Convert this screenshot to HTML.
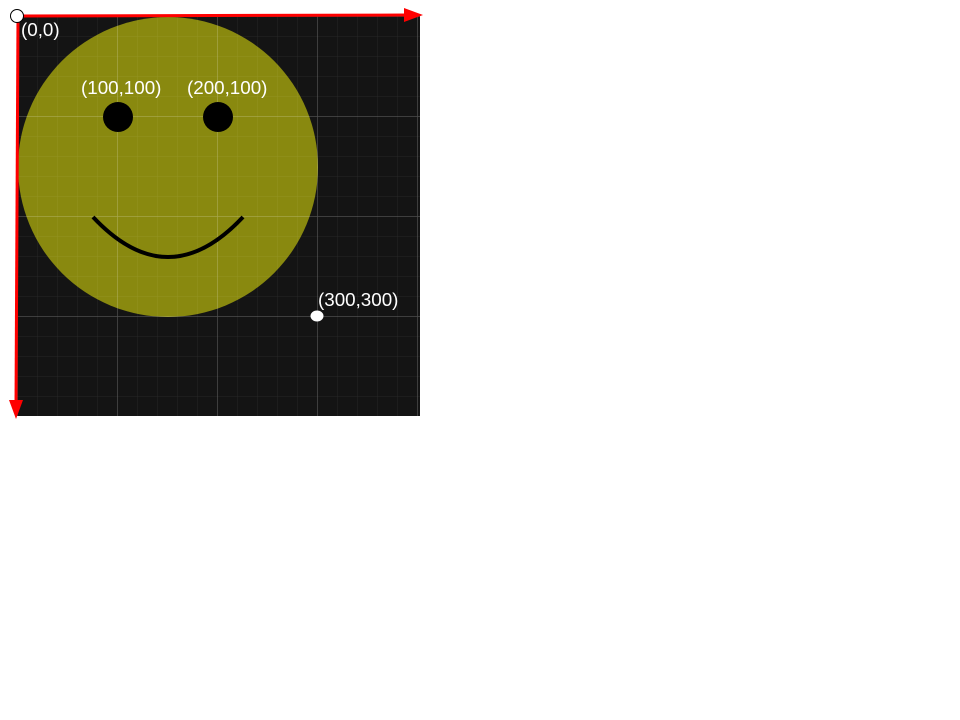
<!DOCTYPE html>
<html><head><style>body{margin:0;background:#fff;width:960px;height:720px;overflow:hidden}</style></head>
<body>
<svg width="960" height="720" style="position:absolute;left:0;top:0" font-family="Liberation Sans, Arial, sans-serif">
<defs>
<pattern id="mn" x="17" y="16" width="20" height="20" patternUnits="userSpaceOnUse"><path d="M0 0H20M0 0V20" stroke="#ffffff" stroke-opacity="0.08" stroke-width="1" fill="none"/></pattern>
<pattern id="mj" x="17" y="16" width="100" height="100" patternUnits="userSpaceOnUse"><path d="M0 0H100M0 0V100" stroke="#ffffff" stroke-opacity="0.2" stroke-width="1.5" fill="none"/></pattern>
</defs>
<rect x="17" y="16" width="403" height="400" fill="#141414"/>
<circle cx="168" cy="167" r="150" fill="#a6a60e" fill-opacity="0.8"/>
<rect x="17" y="16" width="403" height="400" fill="url(#mn)"/>
<rect x="17" y="16" width="403" height="400" fill="url(#mj)"/>
<circle cx="118" cy="117" r="15" fill="#000"/>
<circle cx="218" cy="117" r="15" fill="#000"/>
<path d="M93 217 Q168 297 243 217" stroke="#000" stroke-width="4" fill="none"/>
<line x1="17" y1="16" x2="408" y2="15" stroke="#ff0000" stroke-width="3"/>
<polygon points="404,8 423,15 404,22" fill="#ff0000"/>
<line x1="18" y1="16" x2="16" y2="404" stroke="#ff0000" stroke-width="3"/>
<polygon points="9,400 16,419 23,400" fill="#ff0000"/>
<circle cx="17" cy="16" r="6.5" fill="#fff" stroke="#000" stroke-width="1"/>
<ellipse cx="317" cy="316" rx="6.5" ry="5.5" fill="#fff"/>
<g fill="#fff" font-size="18.8">
<text x="21" y="36">(0,0)</text>
<text x="81" y="94">(100,100)</text>
<text x="187" y="94">(200,100)</text>
<text x="318" y="306">(300,300)</text>
</g>
</svg>
</body></html>
